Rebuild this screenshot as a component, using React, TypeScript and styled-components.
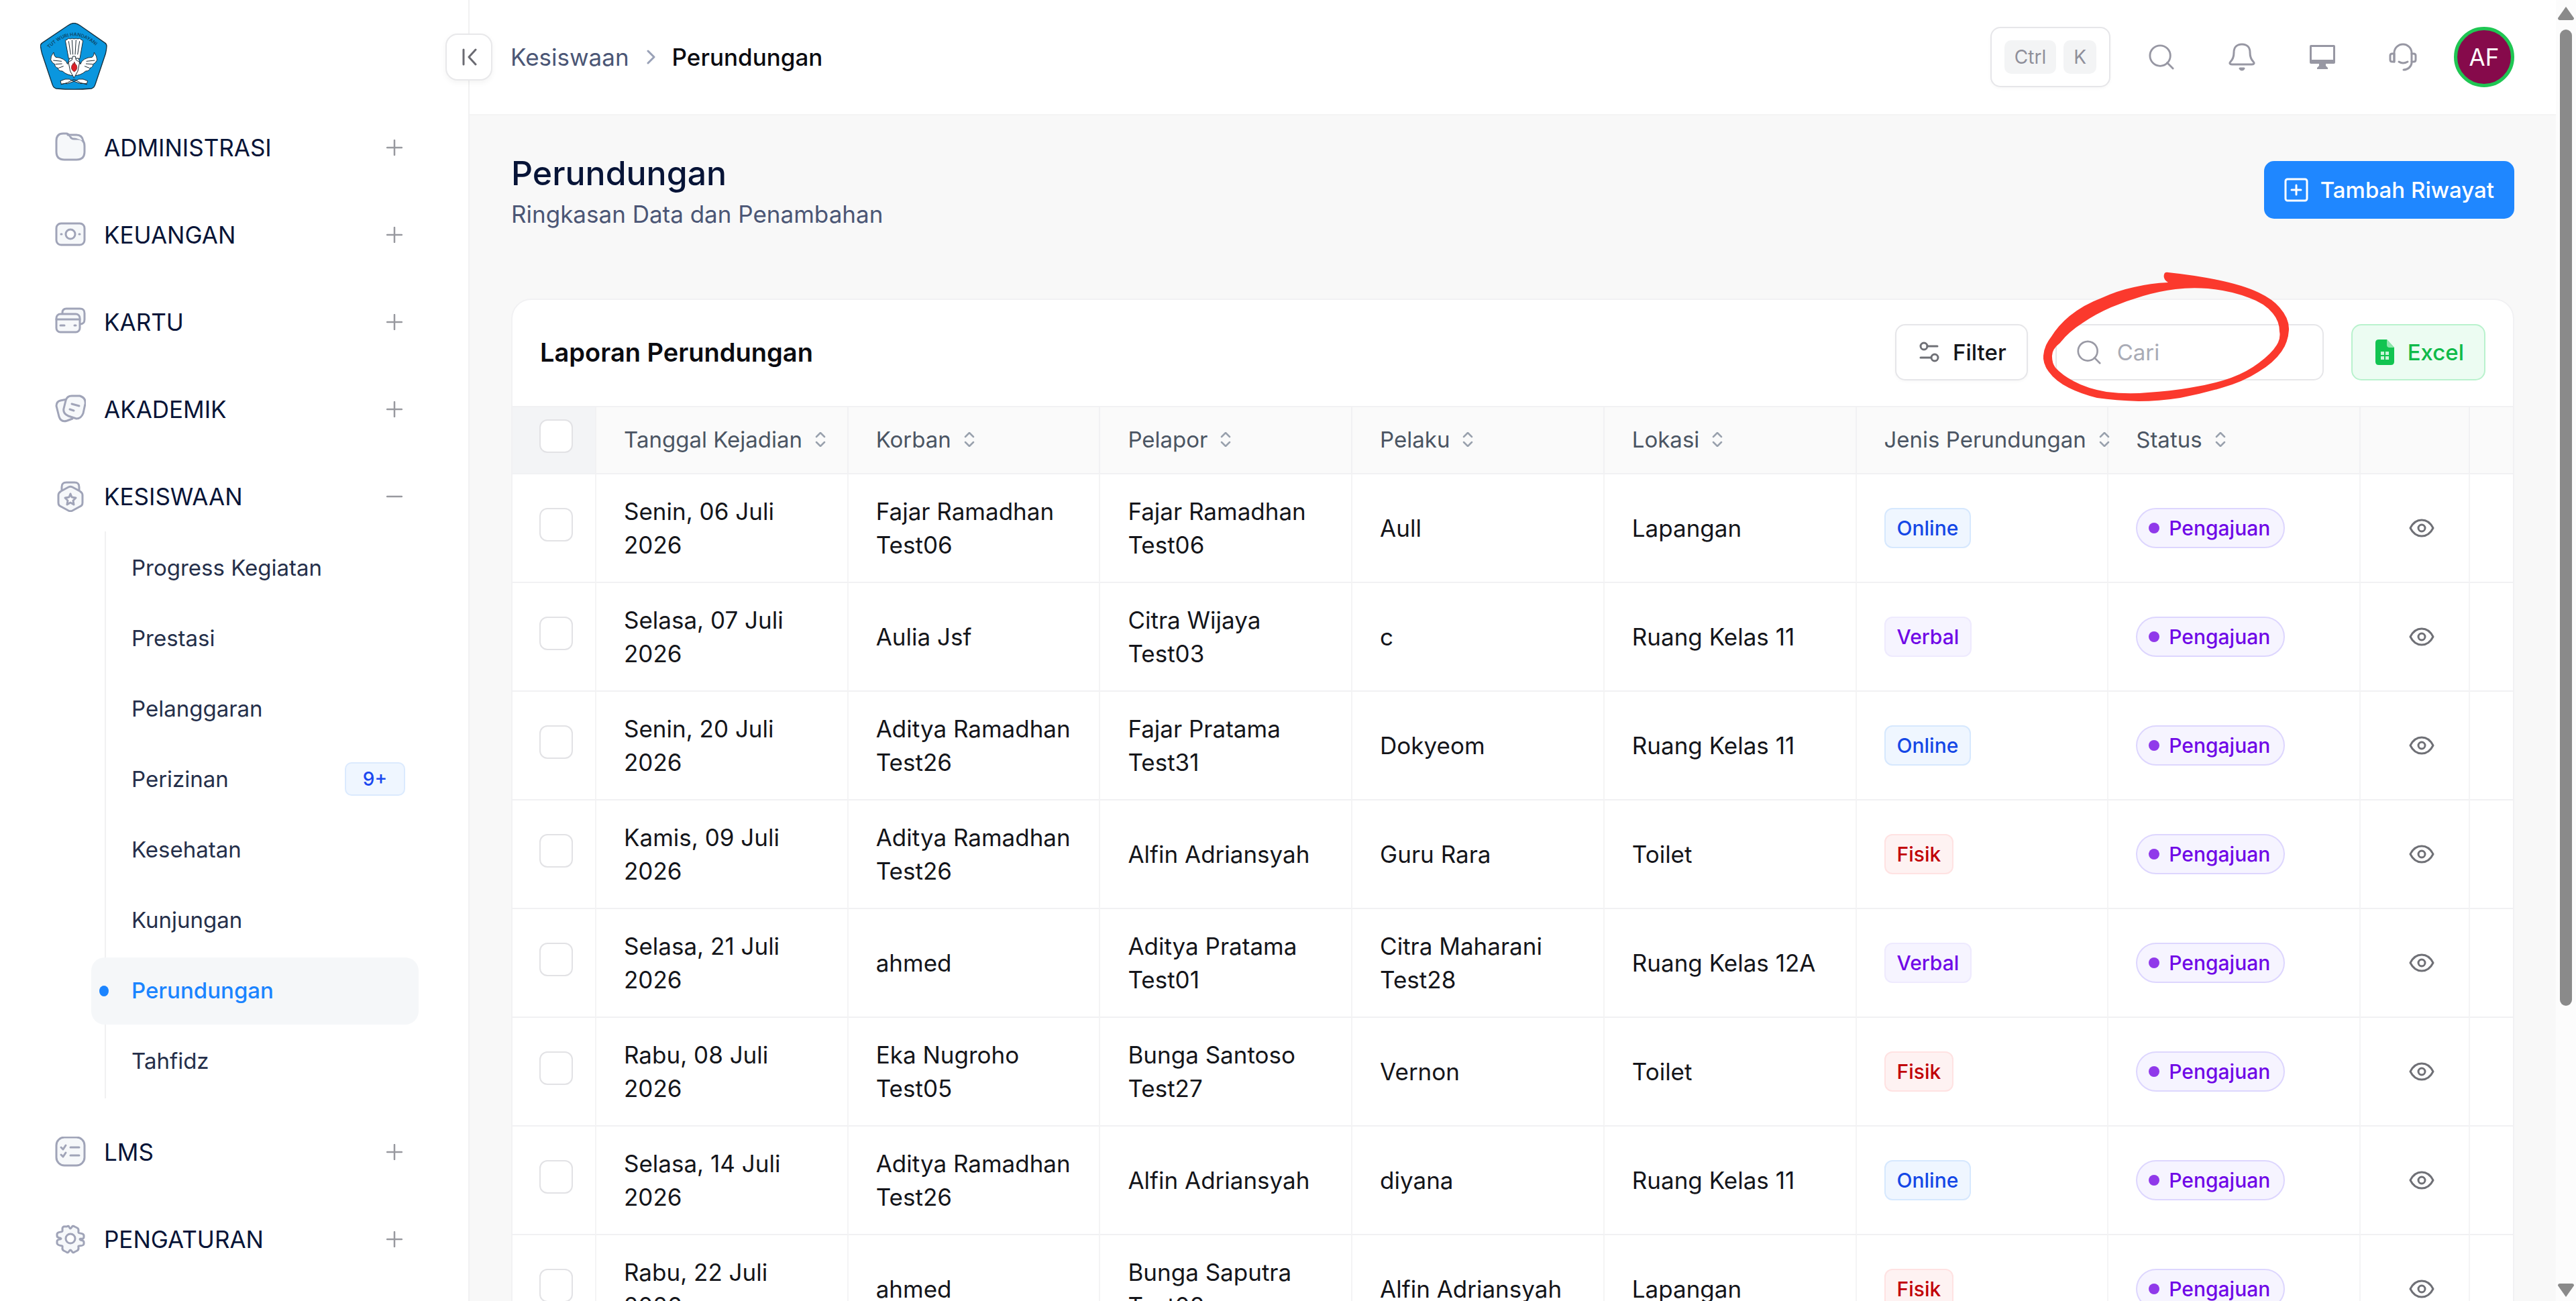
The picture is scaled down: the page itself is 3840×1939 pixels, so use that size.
import React from "react";
import styled, { createGlobalStyle } from "styled-components";

const GlobalStyle = createGlobalStyle`
  *, *::before, *::after { box-sizing: border-box; }
  body {
    margin: 0;
    background: #ffffff;
    color: #14151a;
    font-family: Inter, "Liberation Sans", sans-serif;
    font-size: 35px;
    line-height: 50px;
  }
  button, input { font: inherit; color: inherit; }
  button { padding: 0; border: 0; background: none; cursor: pointer; }
  a { color: inherit; text-decoration: none; }
  h1, h2, p, ul { margin: 0; padding: 0; font-weight: 400; }
  ul { list-style: none; }
  svg { display: block; flex: none; }
`;

const Shell = styled.div`
  display: flex;
  height: 100vh;
  overflow: hidden;
`;

/* ---------- Sidebar ---------- */

const Sidebar = styled.aside`
  flex: none;
  width: 700px;
  border-right: 2px solid #f1f1f2;
`;

const LogoLink = styled.a`
  display: flex;
  align-items: flex-end;
  height: 134px;
  margin-bottom: 36px;
  padding-left: 60px;
`;

const Menu = styled.ul`
  display: flex;
  flex-direction: column;
  gap: 30px;
  padding: 0 74px 0 82px;
`;

const GroupButton = styled.button`
  display: flex;
  align-items: center;
  width: 100%;
  height: 100px;
  padding: 0 24px 0 0;
  color: #071437;
  font-size: 35px;
`;

const GroupLabel = styled.span`
  flex: 1;
  margin-left: 27px;
  text-align: left;
`;

const SubMenu = styled.ul`
  display: flex;
  flex-direction: column;
  gap: 5px;
  margin: 2px 0 0 74px;
  padding: 5px 0;
  border-left: 2px solid #f1f1f2;
`;

const SubLink = styled.a<{ $active?: boolean }>`
  display: flex;
  align-items: center;
  justify-content: space-between;
  position: relative;
  height: 100px;
  margin-left: -22px;
  padding: 0 20px 2px 60px;
  border-radius: 20px;
  background: ${(p) => (p.$active ? "#f5f7f9" : "transparent")};
  color: ${(p) => (p.$active ? "#1b84ff" : "#252f4a")};
  font-size: 33px;
  font-weight: ${(p) => (p.$active ? 500 : 400)};

  &::before {
    content: "";
    display: ${(p) => (p.$active ? "block" : "none")};
    position: absolute;
    left: 12px;
    top: 42px;
    width: 14px;
    height: 16px;
    border-radius: 50%;
    background: #1b84ff;
  }
`;

const CountBadge = styled.span`
  display: flex;
  align-items: center;
  justify-content: center;
  width: 90px;
  height: 50px;
  border: 2px solid #dbeafe;
  border-radius: 10px;
  background: #eff6ff;
  color: #1b48f0;
  font-size: 28px;
  font-weight: 500;
`;

/* ---------- Header ---------- */

const Main = styled.div`
  flex: 1;
  display: flex;
  flex-direction: column;
  min-width: 0;
  background: #f8f8f8;
`;

const Header = styled.header`
  flex: none;
  display: flex;
  align-items: center;
  justify-content: space-between;
  height: 172px;
  padding-right: 62px;
  border-bottom: 2px solid #f4f4f4;
  background: #ffffff;
`;

const HeaderSide = styled.div<{ $gap: number }>`
  display: flex;
  align-items: center;
  gap: ${(p) => p.$gap}px;
`;

const CollapseButton = styled.button`
  display: grid;
  place-items: center;
  width: 70px;
  height: 70px;
  margin-left: -36px;
  border: 2px solid #e8e8ea;
  border-radius: 18px;
  background: #ffffff;
  color: #6b6b72;
  box-shadow: 0 3px 8px rgba(0, 0, 0, 0.05);
`;

const Crumbs = styled.nav`
  display: flex;
  align-items: center;
  gap: 25px;
  color: #99a1b7;
`;

const Crumb = styled.a`
  color: #4b5675;
  font-size: 35px;
`;

const CurrentCrumb = styled.span`
  color: #0b0b10;
  font-size: 35px;
  font-weight: 500;
`;

const Shortcut = styled.button`
  display: flex;
  align-items: center;
  gap: 11px;
  height: 90px;
  padding: 0 19px;
  border: 2px solid #e6e6e9;
  border-radius: 15px;
  background: #ffffff;
  box-shadow: 0 2px 4px rgba(0, 0, 0, 0.03);
`;

const Key = styled.kbd`
  height: 50px;
  padding: 0 15px;
  border-radius: 10px;
  background: #f3f4f5;
  color: #8f8f9a;
  font-family: inherit;
  font-size: 28px;
  line-height: 50px;
`;

const IconRow = styled.div`
  display: flex;
  gap: 20px;
  color: #9797a3;
`;

const IconButton = styled.button`
  display: grid;
  place-items: center;
  width: 100px;
  height: 100px;
`;

const Avatar = styled.button`
  width: 90px;
  height: 90px;
  border: 5px solid #1fc653;
  border-radius: 50%;
  background: #860a4b;
  color: #ffffff;
  font-size: 35px;
`;

/* ---------- Page ---------- */

const Page = styled.main`
  flex: 1;
  min-height: 0;
  padding: 56px 62px 0;
`;

const TitleBar = styled.div`
  display: flex;
  align-items: center;
  justify-content: space-between;
  margin-bottom: 95px;
`;

const PageTitle = styled.h1`
  color: #071437;
  font-size: 50px;
  line-height: 60px;
  font-weight: 500;
`;

const Subtitle = styled.p`
  color: #4b5675;
  font-size: 35px;
  line-height: 62px;
`;

const PrimaryButton = styled.button`
  display: flex;
  align-items: center;
  gap: 18px;
  height: 86px;
  margin-bottom: 12px;
  padding: 0 30px;
  border-radius: 15px;
  background: #1f87ff;
  color: #ffffff;
  font-size: 33px;
  font-weight: 500;
`;

const Card = styled.section`
  border: 2px solid #f1f1f3;
  border-radius: 30px;
  background: #ffffff;
`;

const CardHeader = styled.div`
  display: flex;
  align-items: center;
  justify-content: space-between;
  height: 158px;
  padding: 0 41px 2px;
`;

const CardTitle = styled.h2`
  color: #0b0b10;
  font-size: 38px;
  font-weight: 600;
`;

const ToolButton = styled.button<{ $green?: boolean }>`
  display: flex;
  align-items: center;
  gap: 20px;
  height: 84px;
  padding: 0 30px 0 34px;
  border: 2px solid ${(p) => (p.$green ? "#b9f2cd" : "#e6e6e9")};
  border-radius: 15px;
  background: ${(p) => (p.$green ? "#ecfcf2" : "#ffffff")};
  color: ${(p) => (p.$green ? "#0fba49" : "#14151a")};
  box-shadow: ${(p) => (p.$green ? "none" : "0 2px 4px rgba(0, 0, 0, 0.03)")};
  font-size: 33px;
  font-weight: 500;
`;

const SearchBox = styled.label`
  position: relative;
  display: flex;
  align-items: center;
  gap: 24px;
  width: 400px;
  height: 84px;
  padding: 0 30px;
  border: 2px solid #e6e6e9;
  border-radius: 15px;
  background: #ffffff;
  color: #9a9aa5;
`;

const SearchInput = styled.input`
  flex: 1;
  min-width: 0;
  padding: 0;
  border: 0;
  outline: 0;
  background: transparent;
  font-size: 33px;

  &::placeholder { color: #a9abb5; opacity: 1; }
`;

const Annotation = styled.svg`
  position: absolute;
  left: -20px;
  top: -80px;
  pointer-events: none;
`;

/* ---------- Table ---------- */

const Table = styled.table`
  width: 100%;
  table-layout: fixed;
  border-collapse: separate;
  border-spacing: 0;
`;

const CheckCol = styled.col` width: 125px; `;
const ActionCol = styled.col` width: 163px; `;
const EndCol = styled.col` width: 64px; `;

const Th = styled.th<{ $check?: boolean }>`
  height: 102px;
  padding: ${(p) => (p.$check ? "0 0 12px 40px" : "0 0 2px 41px")};
  border-top: 2px solid #f1f1f3;
  border-bottom: 2px solid #f1f1f3;
  border-right: 2px solid #f1f1f3;
  background: ${(p) => (p.$check ? "#f3f4f6" : "#fafafa")};
  color: #4b5563;
  font-size: 33px;
  font-weight: 400;
  text-align: left;

  &:last-child { border-right: 0; }
`;

const SortButton = styled.button`
  display: flex;
  align-items: center;
  gap: 19px;
  color: #99a1ad;
  white-space: nowrap;
`;

const SortLabel = styled.span`
  color: #4b5563;
`;

const cellPadding = {
  check: "0 0 10px 40px",
  action: "0 0 0 62px",
  text: "0 41px",
} as const;

const Td = styled.td<{ $kind?: keyof typeof cellPadding }>`
  height: 162px;
  padding: ${(p) => cellPadding[p.$kind ?? "text"]};
  border-bottom: 2px solid #f1f1f3;
  border-right: 2px solid #f4f4f5;
  font-size: 35px;
  line-height: 50px;

  &:last-child { padding: 0; border-right: 0; }
`;

const CheckBox = styled.input`
  appearance: none;
  display: block;
  width: 50px;
  height: 50px;
  margin: 0;
  border: 2px solid #e2e2e5;
  border-radius: 12px;
  background: #ffffff;
`;

const tones = {
  Online: ["#eff6ff", "#d6e8fe", "#1447e6"],
  Verbal: ["#f6f4ff", "#eeeafe", "#7008e7"],
  Fisik: ["#fef2f2", "#ffe2e2", "#c10007"],
} as const;

const KindBadge = styled.span<{ $kind: keyof typeof tones }>`
  display: inline-flex;
  align-items: center;
  height: 60px;
  padding: 0 17px;
  border: 2px solid ${(p) => tones[p.$kind][1]};
  border-radius: 12px;
  background: ${(p) => tones[p.$kind][0]};
  color: ${(p) => tones[p.$kind][2]};
  font-size: 30px;
  font-weight: 500;
  vertical-align: middle;
`;

const StatusBadge = styled.span`
  display: inline-flex;
  align-items: center;
  gap: 14px;
  height: 60px;
  padding: 0 20px 0 17px;
  border: 2px solid #ddd6fe;
  border-radius: 30px;
  background: #f6f4ff;
  color: #7008e7;
  font-size: 30px;
  font-weight: 500;
  vertical-align: middle;

  &::before {
    content: "";
    width: 16px;
    height: 16px;
    border-radius: 50%;
    background: #9039ea;
  }
`;

const ViewButton = styled.button`
  display: grid;
  place-items: center;
  width: 58px;
  height: 60px;
  color: #6f7076;
`;

/* ---------- Scroll rail ---------- */

const Rail = styled.div`
  flex: none;
  display: flex;
  flex-direction: column;
  align-items: center;
  width: 30px;
  padding: 10px 0 6px;
  background: #fcfcfc;
  color: #8a8a8a;
`;

const Track = styled.div`
  flex: 1;
  width: 18px;
  padding: 14px 0 4px;
`;

const Thumb = styled.div`
  height: 78%;
  border-radius: 9px;
  background: #8a8a8a;
`;

/* ---------- Icons ---------- */

const line = {
  fill: "none",
  stroke: "currentColor",
  strokeLinecap: "round",
  strokeLinejoin: "round",
} as const;

const menuShapes: Record<string, React.ReactNode> = {
  folder: (
    <>
      <path d="M2 13C2 6 5 2 12 2h5c3 0 4 2 6 5 1 2 2 3 5 3h6c7 0 10 4 10 11v8c0 8-4 12-12 12H14C6 41 2 37 2 29z" />
      <path d="M19 4h13c5 0 9 3 10 9" />
    </>
  ),
  money: (
    <>
      <rect x="2" y="6" width="42" height="32" rx="7" />
      <circle cx="23" cy="22" r="7" fill="#ffffff" />
      <path d="M9 22h1M36 22h1" />
    </>
  ),
  card: (
    <>
      <path d="M11 12V9c0-4 2-6 6-6h20c5 0 7 2 7 7v9c0 5-2 7-7 7" />
      <rect x="2" y="11" width="35" height="27" rx="6" />
      <path d="M2 19h35M8 28h6M29 28h2" />
    </>
  ),
  notes: (
    <>
      <path d="M18 8 8 10c-4 1-6 4-6 8l4 16c2 6 6 8 12 6l8-3" />
      <path d="M25 3h12c6 2 9 6 8 12l-3 14c-2 5-5 8-10 8l-12-4c-5-2-8-6-7-11l3-12c1-4 4-7 9-7z" />
      <path d="m25 15 11 3M22 23l6 2" />
    </>
  ),
  medal: (
    <>
      <path d="M10 13V9c0-5 2-7 7-7h12c5 0 7 2 7 7v4" />
      <path d="m20 9-11 6c-3 2-4 3-4 6v11c0 3 1 5 4 6l11 6c2 1 4 1 6 0l11-6c3-1 4-3 4-6V21c0-3-1-4-4-6L26 9c-2-1-4-1-6 0z" />
      <path d="m23 19 2 5 6 1-4 4 1 6-5-3-5 3 1-6-4-4 6-1z" fill="#ffffff" />
    </>
  ),
  list: (
    <>
      <rect x="2" y="1" width="42" height="42" rx="12" />
      <path d="m9 16 3 3 4-6M9 27l3 3 4-6M23 16h13M23 28h13" />
    </>
  ),
  gear: (
    <>
      <path d="M18 4c3-3 3 3 5 3s2-6 6-3l4 2c4 2 1 6 2 7 1 2 7 0 8 4v3c0 4-6 1-6 3s6 1 6 4v3c-1 4-7 2-8 3s2 5-2 7l-4 2c-3 3-4-3-6-3s-3 6-6 3l-4-2c-4-2-1-6-2-7s-7 0-8-4v-3c0-4 6-2 6-4s-6 0-6-4v-3c1-4 7-2 8-4 1-1-2-5 2-7z" />
      <circle cx="23" cy="22" r="7" fill="#ffffff" />
    </>
  ),
};

function MenuIcon({ name }: { name: string }) {
  return (
    <svg width="46" height="46" viewBox="0 0 46 46" {...line} stroke="#a0a4b8" strokeWidth="3">
      <g fill="#f6f8fa">{menuShapes[name]}</g>
    </svg>
  );
}

function ToggleMark({ open }: { open?: boolean }) {
  return (
    <svg width="24" height="24" viewBox="0 0 24 24" {...line} stroke="#98999f" strokeWidth="2.5">
      <path d={open ? "M1 12h22" : "M1 12h22M12 1v22"} />
    </svg>
  );
}

function SearchGlyph({ size }: { size: number }) {
  return (
    <svg width={size} height={size} viewBox="0 0 40 40" {...line} strokeWidth="3">
      <circle cx="18" cy="18" r="16" />
      <path d="m29 29 9 9" />
    </svg>
  );
}

function Logo() {
  return (
    <svg width="100" height="100" viewBox="30 30 300 300">
      <path
        d="M181 31Q195 33 208 42L318 119Q328 125 327 136Q326 152 322 168L276 305Q272 320 259 324Q181 331 101 324Q88 320 84 305L38 168Q33 150 31 133Q31 125 40 119L154 42Q167 33 181 31z"
        fill="#0a96de"
        stroke="#15303f"
        strokeWidth="4"
      />
      <path id="motto" d="M70 146Q180 32 292 146" fill="none" />
      <text fontSize="21" fontFamily="Inter, sans-serif" fontWeight="600" fill="#0d4668">
        <textPath href="#motto">TUT WURI HANDAYANI</textPath>
      </text>
      <g fill="#ffffff" stroke="#1b2a33" strokeWidth="3" strokeLinejoin="round">
        <path d="M150 105q6-9 14-3 8-5 17 0 9-5 17 0 9-6 15 3l8 5-14 80h-50l-15-81z" />
        <path d="M157 112l9 60M172 106l4 66M190 106l-4 66M206 112l-9 60" fill="none" />
        <path d="M90 162q-15 18-13 34 8 16 18 19 0 14 14 17 2 14 20 14 22 20 52 20t52-20q17 0 20-14 13-3 13-17 12-4 18-19 0-16-13-34 0 16-9 22-20 0-35 9-14 8-17 22l-9-26h-40l-9 26q-4-14-19-22-15-9-34-9-9-8-9-22z" />
        <path d="M88 198l38 4M98 215l30-2M112 232l22-8M274 198l-38 4M264 215l-30-2M250 232l-22-8" fill="none" />
        <path d="M120 290q22-12 40-8l21 10 21-10q20-4 40 8l-4 12q-16-2-28 0l-29-10-29 10q-14-2-28 2z" />
        <path d="M122 306q28-4 59-24 28 20 59 24" fill="none" />
        <path d="M175 180h12l3 16 16 10-8 40-17 30-17-30-8-40 16-10z" />
      </g>
      <path d="M182 204q4 10 11 17 5 18-11 28-17-10-11-28 4-4 6-10l3 5z" fill="#dc1f26" stroke="#5c1014" strokeWidth="2" />
    </svg>
  );
}

/* ---------- Data ---------- */

const subItems = [
  "Progress Kegiatan",
  "Prestasi",
  "Pelanggaran",
  "Perizinan",
  "Kesehatan",
  "Kunjungan",
  "Perundungan",
  "Tahfidz",
];

const groups = [
  { label: "ADMINISTRASI", icon: "folder" },
  { label: "KEUANGAN", icon: "money" },
  { label: "KARTU", icon: "card" },
  { label: "AKADEMIK", icon: "notes" },
  { label: "KESISWAAN", icon: "medal", items: subItems },
  { label: "LMS", icon: "list" },
  { label: "PENGATURAN", icon: "gear" },
];

const columns = ["Tanggal Kejadian", "Korban", "Pelapor", "Pelaku", "Lokasi", "Jenis Perundungan", "Status"];

type Kind = keyof typeof tones;
const rows: [string, string, string, string, string, Kind][] = [
  ["Senin, 06 Juli 2026", "Fajar Ramadhan Test06", "Fajar Ramadhan Test06", "Aull", "Lapangan", "Online"],
  ["Selasa, 07 Juli 2026", "Aulia Jsf", "Citra Wijaya Test03", "c", "Ruang Kelas 11", "Verbal"],
  ["Senin, 20 Juli 2026", "Aditya Ramadhan Test26", "Fajar Pratama Test31", "Dokyeom", "Ruang Kelas 11", "Online"],
  ["Kamis, 09 Juli 2026", "Aditya Ramadhan Test26", "Alfin Adriansyah", "Guru Rara", "Toilet", "Fisik"],
  ["Selasa, 21 Juli 2026", "ahmed", "Aditya Pratama Test01", "Citra Maharani Test28", "Ruang Kelas 12A", "Verbal"],
  ["Rabu, 08 Juli 2026", "Eka Nugroho Test05", "Bunga Santoso Test27", "Vernon", "Toilet", "Fisik"],
  ["Selasa, 14 Juli 2026", "Aditya Ramadhan Test26", "Alfin Adriansyah", "diyana", "Ruang Kelas 11", "Online"],
  ["Rabu, 22 Juli 2026", "ahmed", "Bunga Saputra Test08", "Alfin Adriansyah", "Lapangan", "Fisik"],
];

export default function App() {
  return (
    <Shell>
      <GlobalStyle />
      <Sidebar>
        <LogoLink href="#" aria-label="Beranda">
          <Logo />
        </LogoLink>
        <Menu>
          {groups.map((group) => (
            <li key={group.label}>
              <GroupButton aria-expanded={Boolean(group.items)}>
                <MenuIcon name={group.icon} />
                <GroupLabel>{group.label}</GroupLabel>
                <ToggleMark open={Boolean(group.items)} />
              </GroupButton>
              {group.items && (
                <SubMenu>
                  {group.items.map((item) => (
                    <li key={item}>
                      <SubLink href="#" $active={item === "Perundungan"}>
                        {item}
                        {item === "Perizinan" && <CountBadge>9+</CountBadge>}
                      </SubLink>
                    </li>
                  ))}
                </SubMenu>
              )}
            </li>
          ))}
        </Menu>
      </Sidebar>

      <Main>
        <Header>
          <HeaderSide $gap={27}>
            <CollapseButton aria-label="Tutup menu">
              <svg width="24" height="26" viewBox="0 0 24 26" {...line} strokeWidth="3">
                <path d="M4 2v22M22 2 12 13l10 11" />
              </svg>
            </CollapseButton>
            <Crumbs>
              <Crumb href="#">Kesiswaan</Crumb>
              <svg width="14" height="22" viewBox="0 0 14 22" {...line} strokeWidth="3">
                <path d="m3 2 9 9-9 9" />
              </svg>
              <CurrentCrumb>Perundungan</CurrentCrumb>
            </Crumbs>
          </HeaderSide>
          <HeaderSide $gap={26}>
            <Shortcut>
              <Key>Ctrl</Key>
              <Key>K</Key>
            </Shortcut>
            <IconRow>
              <IconButton aria-label="Cari">
                <SearchGlyph size={38} />
              </IconButton>
              <IconButton aria-label="Notifikasi">
                <svg width="40" height="42" viewBox="0 0 40 42" {...line} strokeWidth="3">
                  <path d="M20 2c8 0 12 5 12 12 0 8 2 11 5 14 2 2 1 4-2 4H5c-3 0-4-2-2-4 3-3 5-6 5-14C8 7 12 2 20 2z" />
                  <path d="M17 38q3 4 6 0z" />
                </svg>
              </IconButton>
              <IconButton aria-label="Layar">
                <svg width="38" height="38" viewBox="0 0 38 38" fill="currentColor">
                  <path fillRule="evenodd" d="M2 1h34q2 0 2 2v24q0 2-2 2H24v3l3 3v2H11v-2l3-3v-3H2q-2 0-2-2V3q0-2 2-2zm1 3v19h32V4z" />
                </svg>
              </IconButton>
              <IconButton aria-label="Bantuan">
                <svg width="42" height="42" viewBox="0 0 42 42" {...line} strokeWidth="3">
                  <path d="M8 28V15a13 13 0 0 1 26 0v15c-1 6-6 10-12 10" />
                  <path d="M8 16H5q-3 0-3 3v6q0 3 3 3h3zM34 16h3q3 0 3 3v6q0 3-3 3h-3M15 28q6 4 13 0" />
                </svg>
              </IconButton>
            </IconRow>
            <Avatar>AF</Avatar>
          </HeaderSide>
        </Header>

        <Page>
          <TitleBar>
            <div>
              <PageTitle>Perundungan</PageTitle>
              <Subtitle>Ringkasan Data dan Penambahan</Subtitle>
            </div>
            <PrimaryButton>
              <svg width="36" height="36" viewBox="0 0 36 36" {...line} strokeWidth="3">
                <rect x="2" y="2" width="32" height="32" rx="3" />
                <path d="M18 11v14M11 18h14" />
              </svg>
              Tambah Riwayat
            </PrimaryButton>
          </TitleBar>

          <Card>
            <CardHeader>
              <CardTitle>Laporan Perundungan</CardTitle>
              <HeaderSide $gap={41}>
                <ToolButton>
                  <svg width="30" height="32" viewBox="0 0 30 32" {...line} stroke="#6f7076" strokeWidth="3">
                    <circle cx="7" cy="7" r="5" />
                    <path d="M12 7h15M2 24h15" />
                    <circle cx="23" cy="24" r="5" />
                  </svg>
                  Filter
                </ToolButton>
                <SearchBox>
                  <SearchGlyph size={36} />
                  <SearchInput type="text" placeholder="Cari" aria-label="Cari" />
                  <Annotation width="368" height="194" viewBox="0 0 368 194" fill="#fb392d" aria-hidden="true">
                    <path
                      fillRule="evenodd"
                      d="M180 4Q181 0 186 1Q224 5 259 12Q298 20 321 31Q342 41 352 53Q367 70 366 87Q365 105 355 119Q343 136 321 149Q298 164 266 173Q236 182 204 188Q172 193 142 193Q108 192 80 188Q56 182 38 173Q18 163 8 149Q-1 137 0 125Q1 111 11 98Q22 80 39 66Q60 49 87 39Q111 28 135 23Q160 17 186 16Q178 11 180 4zM245 25Q220 23 197 26Q173 29 149 36Q125 43 101 53Q78 63 59 76Q37 90 25 106Q12 116 13 127Q13 136 18 143Q28 154 45 163Q65 174 94 179Q126 183 156 180Q189 178 218 173Q252 168 280 158Q304 149 321 136Q340 122 348 109Q354 99 352 89Q352 74 342 62Q330 47 307 39Q280 28 245 25z"
                    />
                  </Annotation>
                </SearchBox>
                <ToolButton $green>
                  <svg width="28" height="38" viewBox="0 0 28 38">
                    <path d="M5 0h12l11 12v21q0 5-5 5H5q-5 0-5-5V5q0-5 5-5z" fill="#12c451" />
                    <path d="M17 0v8q0 4 4 4h7z" fill="#8fe6ad" />
                    <path d="M8 18h12v12H8z" fill="#c9f5d8" />
                    <path d="M14 17v14M7 24h14" stroke="#12c451" strokeWidth="2" />
                  </svg>
                  Excel
                </ToolButton>
              </HeaderSide>
            </CardHeader>

            <Table>
              <colgroup>
                <CheckCol />
                {columns.map((column) => (
                  <col key={column} />
                ))}
                <ActionCol />
                <EndCol />
              </colgroup>
              <thead>
                <tr>
                  <Th $check>
                    <CheckBox type="checkbox" aria-label="Pilih semua" />
                  </Th>
                  {columns.map((column) => (
                    <Th key={column}>
                      <SortButton>
                        <SortLabel>{column}</SortLabel>
                        <svg width="16" height="22" viewBox="0 0 16 22" {...line} strokeWidth="2.5">
                          <path d="m2 7 6-6 6 6M2 15l6 6 6-6" />
                        </svg>
                      </SortButton>
                    </Th>
                  ))}
                  <Th />
                  <Th />
                </tr>
              </thead>
              <tbody>
                {rows.map(([date, victim, reporter, offender, place, kind]) => (
                  <tr key={date}>
                    <Td $kind="check">
                      <CheckBox type="checkbox" aria-label={`Pilih ${date}`} />
                    </Td>
                    <Td>{date}</Td>
                    <Td>{victim}</Td>
                    <Td>{reporter}</Td>
                    <Td>{offender}</Td>
                    <Td>{place}</Td>
                    <Td>
                      <KindBadge $kind={kind}>{kind}</KindBadge>
                    </Td>
                    <Td>
                      <StatusBadge>Pengajuan</StatusBadge>
                    </Td>
                    <Td $kind="action">
                      <ViewButton aria-label="Lihat detail">
                        <svg width="38" height="28" viewBox="0 0 38 28" {...line} strokeWidth="3">
                          <path d="M2 14C6 6 12 2 19 2s13 4 17 12c-4 8-10 12-17 12S6 22 2 14z" />
                          <circle cx="19" cy="14" r="5" />
                        </svg>
                      </ViewButton>
                    </Td>
                    <Td />
                  </tr>
                ))}
              </tbody>
            </Table>
          </Card>
        </Page>
      </Main>

      <Rail aria-hidden="true">
        <svg width="24" height="20" viewBox="0 0 24 20" fill="currentColor">
          <path d="M12 0 24 17q0 3-3 3H3q-3 0-3-3z" />
        </svg>
        <Track>
          <Thumb />
        </Track>
        <svg width="24" height="20" viewBox="0 0 24 20" fill="currentColor">
          <path d="M12 20 0 3q0-3 3-3h18q3 0 3 3z" />
        </svg>
      </Rail>
    </Shell>
  );
}
